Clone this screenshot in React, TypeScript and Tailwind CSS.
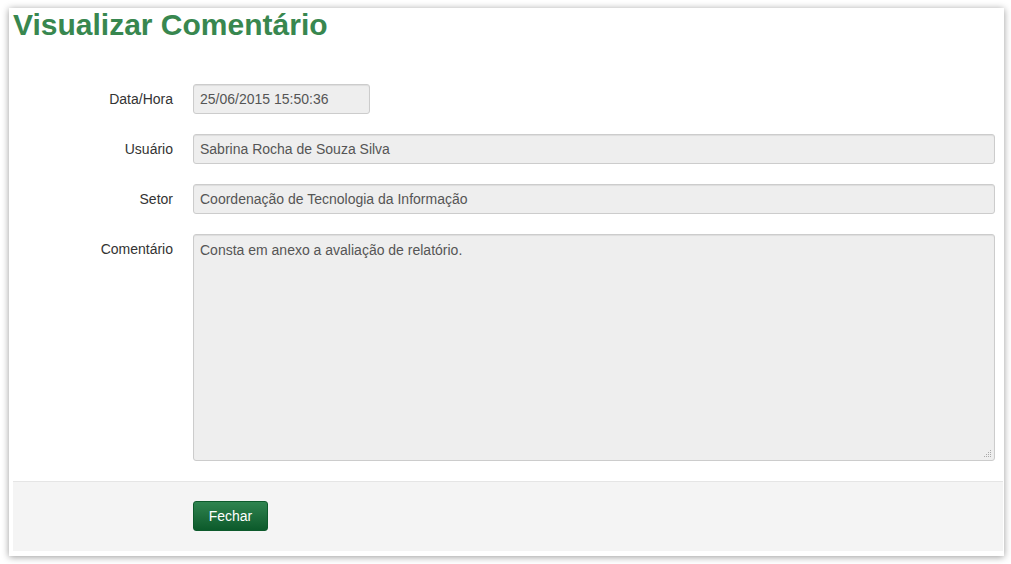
export default function App() {
  const rows = [
    { label: "Data/Hora", value: "25/06/2015 15:50:36", narrow: true },
    { label: "Usuário", value: "Sabrina Rocha de Souza Silva" },
    { label: "Setor", value: "Coordenação de Tecnologia da Informação" },
  ];

  return (
    <div className="h-[564px] w-[1011px] bg-white pl-[9px] pt-[8px] font-['Liberation_Sans',Arial,sans-serif]">
      <div className="flex h-[548px] w-[995px] flex-col bg-white pb-[5px] pl-[4px] pr-[1px] shadow-[0_1px_7px_rgba(0,0,0,0.4)]">
        <h1 className="text-[30px] font-bold leading-[34px] text-[#38874f]">
          Visualizar Comentário
        </h1>

        <div className="mt-[42px] flex flex-col gap-[20px] pr-[8px]">
          {rows.map((r) => (
            <div key={r.label} className="flex items-center gap-[20px]">
              <label className="w-[160px] text-right text-[14px] text-[#333]">
                {r.label}
              </label>
              <div
                className={
                  "h-[30px] rounded-[3px] border border-[#ccc] bg-[#eee] px-[6px] text-[14px] leading-[28px] text-[#555] shadow-[inset_0_1px_1px_rgba(0,0,0,0.075)] " +
                  (r.narrow ? "w-[177px]" : "flex-1")
                }
              >
                {r.value}
              </div>
            </div>
          ))}

          <div className="flex items-start gap-[20px]">
            <label className="w-[160px] pt-[7px] text-right text-[14px] leading-[16px] text-[#333]">
              Comentário
            </label>
            <div className="relative h-[227px] flex-1 rounded-[3px] border border-[#ccc] bg-[#eee] px-[6px] pt-[7px] text-[14px] leading-[16px] text-[#555] shadow-[inset_0_1px_1px_rgba(0,0,0,0.075)]">
              Consta em anexo a avaliação de relatório.
              <svg
                className="absolute bottom-[2px] right-[2px]"
                width="9"
                height="9"
                viewBox="0 0 9 9"
              >
                <rect x="7" y="1" width="1" height="1" fill="#aaa" />
                <rect x="5" y="3" width="1" height="1" fill="#aaa" />
                <rect x="7" y="3" width="1" height="1" fill="#aaa" />
                <rect x="3" y="5" width="1" height="1" fill="#aaa" />
                <rect x="5" y="5" width="1" height="1" fill="#aaa" />
                <rect x="7" y="5" width="1" height="1" fill="#aaa" />
                <rect x="1" y="7" width="1" height="1" fill="#aaa" />
                <rect x="3" y="7" width="1" height="1" fill="#aaa" />
                <rect x="5" y="7" width="1" height="1" fill="#aaa" />
                <rect x="7" y="7" width="1" height="1" fill="#aaa" />
              </svg>
            </div>
          </div>
        </div>

        <div className="mt-[20px] flex flex-1 items-start border-t border-[#e5e5e5] bg-[#f4f4f4] pl-[180px] pt-[19px]">
          <button className="h-[30px] w-[75px] rounded-[3px] border border-[#0d5a2c] bg-gradient-to-b from-[#2f8450] to-[#0b5a2b] text-[14px] text-white">
            Fechar
          </button>
        </div>
      </div>
    </div>
  );
}
